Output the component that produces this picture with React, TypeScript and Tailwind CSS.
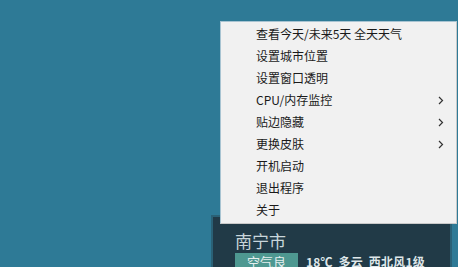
import React from "react";

const items = [
  { label: "查看今天/未来5天 全天天气" },
  { label: "设置城市位置" },
  { label: "设置窗口透明" },
  { label: "CPU/内存监控", sub: true },
  { label: "贴边隐藏", sub: true },
  { label: "更换皮肤", sub: true },
  { label: "开机启动" },
  { label: "退出程序" },
  { label: "关于" },
];

const font = { fontFamily: '"Microsoft YaHei", "Noto Sans CJK SC", "Noto Sans", sans-serif' };

export default function App() {
  return (
    <div className="relative w-[458px] h-[267px] overflow-hidden bg-[#2e7a96]" style={font}>
      {/* weather window */}
      <div className="absolute left-[211px] top-[215px] w-[241px] h-[60px] bg-[#2a6176] p-[2px]">
        <div className="w-full h-full bg-[#213a47] pl-[22px] pt-[13px]">
          <div className="text-[17px] leading-[22px] text-[#c9d6db]">南宁市</div>
          <div className="mt-[1px] flex items-center gap-[8px]">
            <span className="w-[63px] h-[18px] bg-[#4e9891] text-center text-[13px] leading-[18px] text-[#e4eeee]">
              空气良
            </span>
            <span className="text-[12px] font-bold leading-[18px] text-[#dfe7ea] tracking-[0.2px]">
              18℃&nbsp; 多云&nbsp; 西北风1级
            </span>
          </div>
        </div>
      </div>

      {/* context menu */}
      <div className="absolute left-[220px] top-[21px] w-[237px] h-[203px] bg-[#f1f1f1] border border-[#a8c4d2] border-r-[#c9c9c9] border-b-[#c9c9c9] pt-[1px]">
        {items.map((it) => (
          <div key={it.label} className="flex items-center h-[22px] pl-[35px] pr-[10px] text-[12px] text-[#1a1a1a]">
            <span className="flex-1">{it.label}</span>
            {it.sub && (
              <svg width="6" height="9" viewBox="0 0 6 9" className="mr-[2px]">
                <path d="M1 1 L4.5 4.5 L1 8" stroke="#333" strokeWidth="1.2" fill="none" />
              </svg>
            )}
          </div>
        ))}
      </div>
    </div>
  );
}
